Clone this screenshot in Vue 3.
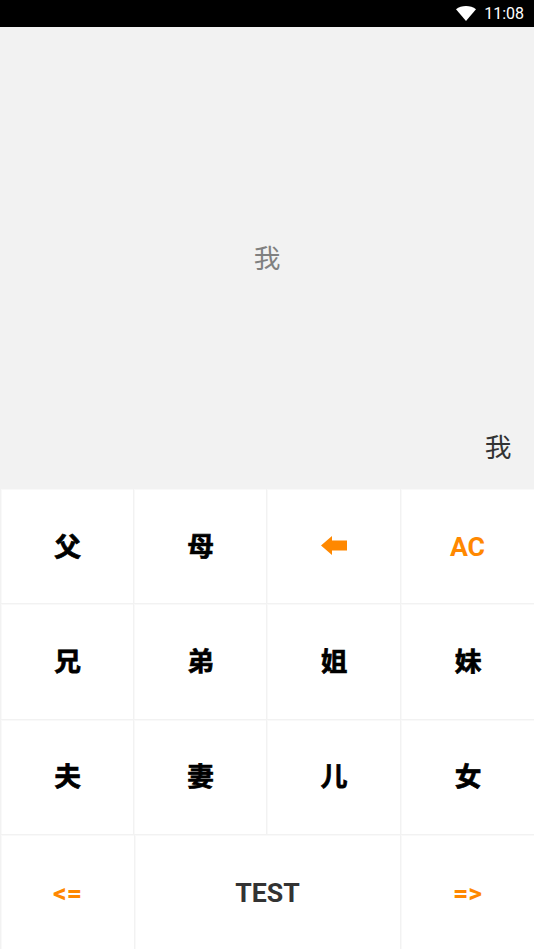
<script setup>
const rows = [
  [
    { t: "父" },
    { t: "母" },
    { icon: true, cls: "arrow" },
    { t: "AC", cls: "latin orange" },
  ],
  [{ t: "兄" }, { t: "弟" }, { t: "姐" }, { t: "妹" }],
  [{ t: "夫" }, { t: "妻" }, { t: "儿" }, { t: "女" }],
];
</script>

<template>
  <div class="page">
    <div class="status">
      <svg class="wifi" viewBox="0 0 20 15" width="20" height="15">
        <path d="M10 15 L0 3.2 C2.8 1.1 6.2 0 10 0 C13.8 0 17.2 1.1 20 3.2 Z" fill="#fff" />
      </svg>
      <span class="time">11:08</span>
    </div>

    <div class="screen">
      <div class="input">我</div>
      <div class="result">我</div>
    </div>

    <div class="keys">
      <div class="row" v-for="(row, i) in rows" :key="i">
        <button class="key" v-for="(k, j) in row" :key="j" :class="k.cls">
          <svg v-if="k.icon" viewBox="0 0 26 19" width="26" height="19">
            <path d="M0 9.5 L11 0 V4.5 H26 V14.5 H11 V19 Z" fill="#ff8800" />
          </svg>
          <template v-else>{{ k.t }}</template>
        </button>
      </div>
      <div class="row last">
        <button class="key latin orange">&lt;=</button>
        <button class="key latin">TEST</button>
        <button class="key latin orange">=&gt;</button>
      </div>
    </div>
  </div>
</template>

<style scoped>
.page {
  width: 534px;
  height: 949px;
  display: flex;
  flex-direction: column;
  background: #f2f2f2;
  overflow: hidden;
  font-family: "Noto Sans CJK SC", sans-serif;
}

.status {
  height: 27px;
  flex: none;
  background: #000;
  color: #fff;
  display: flex;
  align-items: center;
  justify-content: flex-end;
  gap: 8px;
  padding-right: 10px;
}

.wifi {
  margin-top: -1px;
}

.time {
  font-family: Roboto, sans-serif;
  font-size: 16px;
}

.screen {
  height: 462px;
  flex: none;
  position: relative;
  display: flex;
  align-items: center;
  justify-content: center;
}

.input {
  font-size: 26.7px;
  color: #808080;
  margin-bottom: 3px;
}

.result {
  position: absolute;
  right: 22.5px;
  bottom: 26px;
  font-size: 26.7px;
  line-height: 34px;
  color: #333;
}

.keys {
  flex: 1;
  display: flex;
  flex-direction: column;
  gap: 1px;
  padding-left: 1px;
}

.row {
  flex: 1;
  display: grid;
  grid-template-columns: 132px 132px 133px 133px;
  gap: 1px;
}

.row.last {
  grid-template-columns: 133px 1fr 133px;
}

.key {
  border: none;
  padding: 0 0 4px 1px;
  background: #fff;
  box-shadow: inset 1px 0 #f9f9f9, inset 0 1px #f9f9f9;
  font-family: "Noto Sans CJK SC", sans-serif;
  font-size: 26.7px;
  font-weight: 700;
  -webkit-text-stroke: 0.7px #000;
  color: #000;
  display: flex;
  align-items: center;
  justify-content: center;
}

.arrow {
  padding: 0 0 1px;
}

.latin {
  padding: 2px 0 0;
  font-family: Roboto, sans-serif;
  font-weight: 700;
  -webkit-text-stroke: 0;
  color: #333;
}

.orange {
  color: #ff8800;
}
</style>
